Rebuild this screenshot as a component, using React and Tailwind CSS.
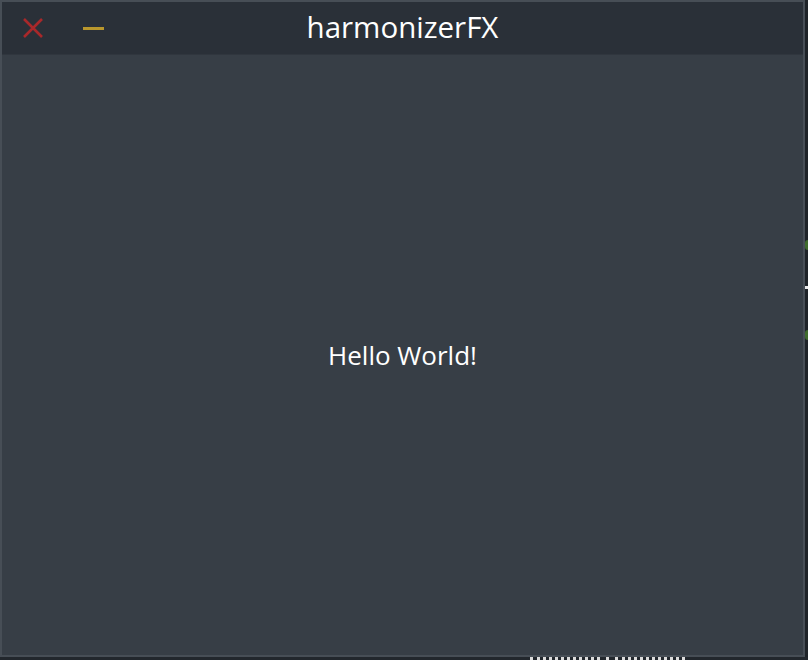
import React from 'react';

const CloseIcon = () => (
  <svg width="22" height="22" viewBox="0 0 22 22" className="block">
    <path d="M2 2 L20 20 M20 2 L2 20" stroke="#a8282a" strokeWidth="2.6" strokeLinecap="butt" />
  </svg>
);

const App = () => {
  return (
    <div className="w-[808px] h-[660px] overflow-hidden bg-[#22272d] flex flex-col" style={{ fontFamily: '"Open Sans", "DejaVu Sans", sans-serif' }}>
      <div className="flex h-[657px]">
        {/* window */}
        <div className="w-[805px] h-[657px] border-2 border-[#474e56] bg-[#373e46] flex flex-col">
          {/* title bar */}
          <div className="h-[53px] bg-[#2a3038] border-b border-[#30363e] flex items-center relative">
            <div className="flex items-center pl-[20px] gap-[39px]">
              <CloseIcon />
              <div className="w-[21px] h-[3px] bg-[#b9972d]" />
            </div>
            <div className="absolute left-0 right-0 top-0 h-[53px] flex items-center justify-center text-white text-[29.5px] font-medium pb-[2px]">
              harmonizerFX
            </div>
          </div>
          {/* body */}
          <div className="flex-1 flex items-center justify-center">
            <span className="text-white text-[26px] font-medium">Hello World!</span>
          </div>
        </div>
        {/* strip at right edge */}
        <div className="w-[3px] flex flex-col bg-[#1e2328]">
          <div className="h-[240px]" />
          <div className="h-[10px] bg-[#3f6b2c] rounded-l-full" />
          <div className="h-[36px]" />
          <div className="h-[3px] bg-[#e8e8e8]" />
          <div className="h-[41px]" />
          <div className="h-[10px] bg-[#3f6b2c] rounded-l-full" />
        </div>
      </div>
      <div className="flex pl-[530px] gap-[6px]">
        <div className="w-[70px] border-t-[3px] border-dotted border-[#dcdcdc]" />
        <div className="w-[3px] border-t-[3px] border-[#dcdcdc]" />
        <div className="w-[70px] border-t-[3px] border-dotted border-[#dcdcdc]" />
      </div>
    </div>
  );
};

export default App;
